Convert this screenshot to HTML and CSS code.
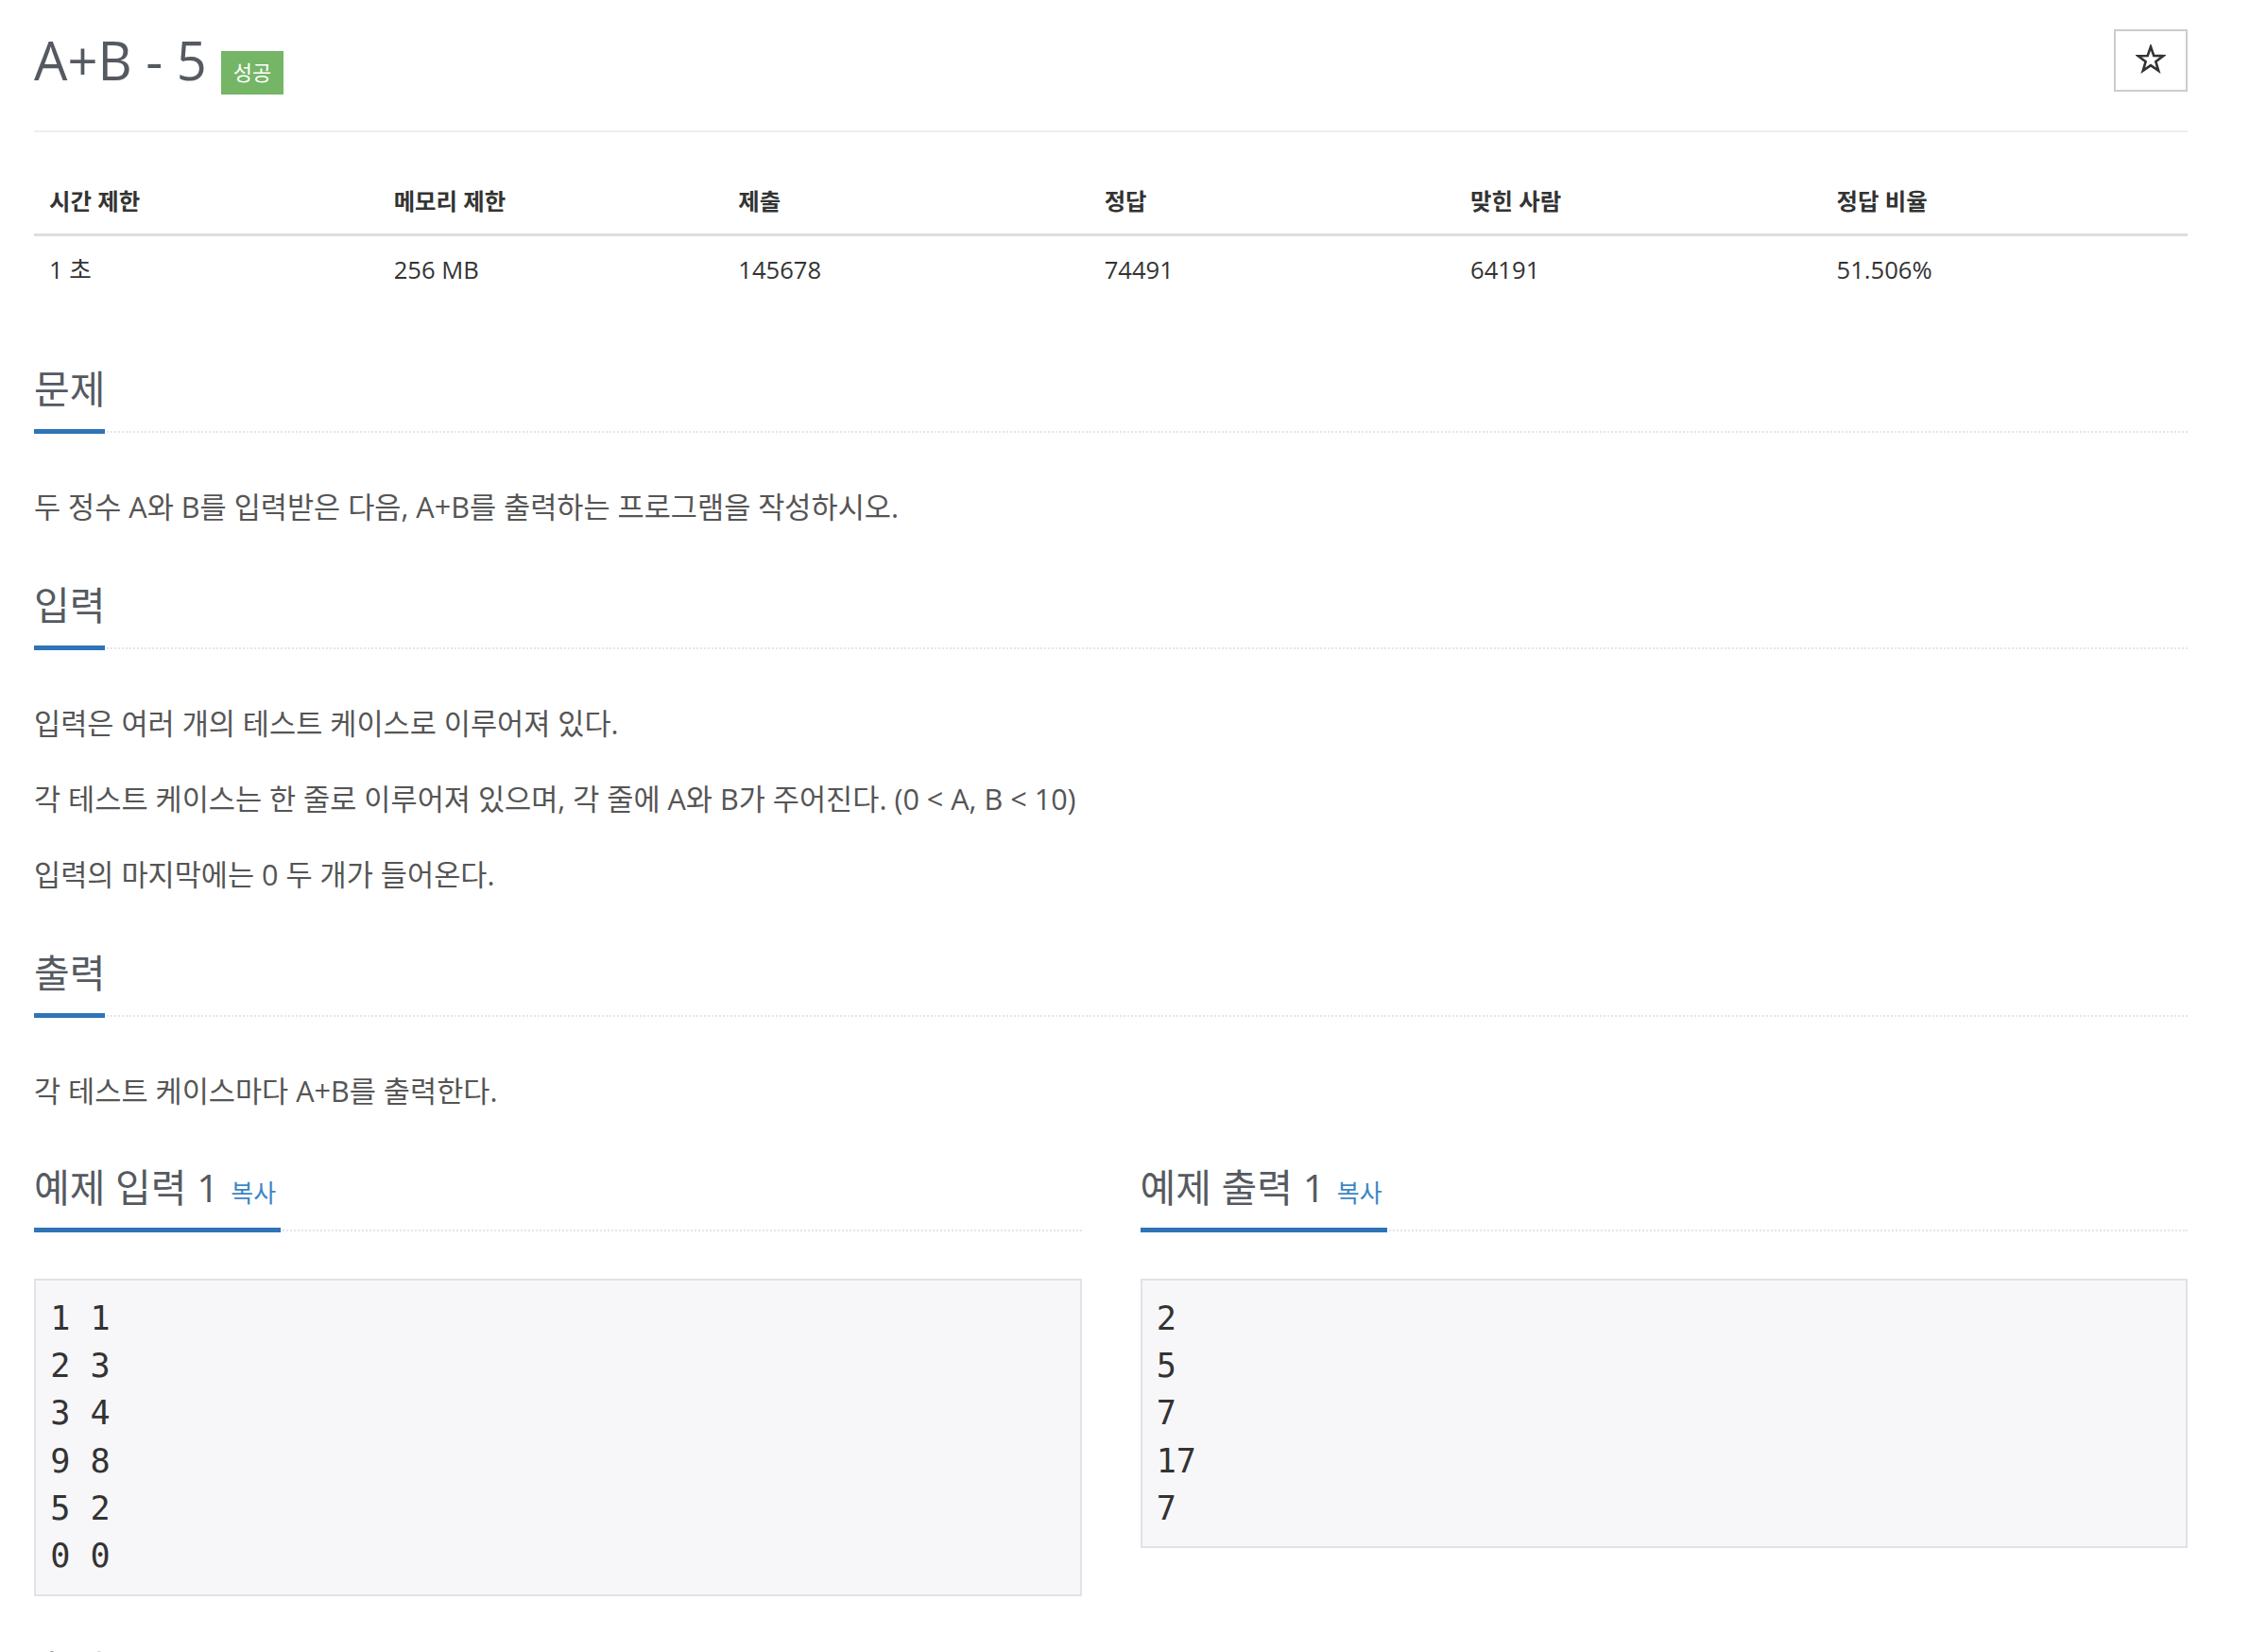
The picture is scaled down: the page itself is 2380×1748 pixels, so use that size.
FILE: index.html
```html
<!DOCTYPE html>
<html lang="ko">
<head>
<meta charset="utf-8">
<title>A+B - 5</title>
<link rel="stylesheet" href="styles.css">
</head>
<body>
<div class="page">
  <header class="page-header">
    <h1 class="title"><span class="title-text">A+B - 5</span><span class="label-success">성공</span></h1>
    <button class="star-btn" type="button" aria-label="즐겨찾기">
      <svg width="32" height="31" viewBox="-2 -2 32 31" aria-hidden="true">
        <polygon points="14,0.5 17.29,9.97 27.31,10.17 19.33,16.23 22.23,25.83 14,20.1 5.77,25.83 8.67,16.23 0.69,10.17 10.71,9.97" fill="none" stroke="#333" stroke-width="2.6" stroke-linejoin="miter"/>
      </svg>
    </button>
  </header>

  <table class="info">
    <colgroup>
      <col class="c16"><col class="c16"><col class="c17"><col class="c17"><col class="c17"><col class="c17">
    </colgroup>
    <thead>
      <tr><th>시간 제한</th><th>메모리 제한</th><th>제출</th><th>정답</th><th>맞힌 사람</th><th>정답 비율</th></tr>
    </thead>
    <tbody>
      <tr><td>1 초</td><td>256 MB</td><td>145678</td><td>74491</td><td>64191</td><td>51.506%</td></tr>
    </tbody>
  </table>

  <section class="sec first">
    <div class="headline"><h2>문제</h2></div>
    <div class="text">
      <p>두 정수 A와 B를 입력받은 다음, A+B를 출력하는 프로그램을 작성하시오.</p>
    </div>
  </section>

  <section class="sec">
    <div class="headline"><h2>입력</h2></div>
    <div class="text">
      <p>입력은 여러 개의 테스트 케이스로 이루어져 있다.</p>
      <p>각 테스트 케이스는 한 줄로 이루어져 있으며, 각 줄에 A와 B가 주어진다. (0 &lt; A, B &lt; 10)</p>
      <p>입력의 마지막에는 0 두 개가 들어온다.</p>
    </div>
  </section>

  <section class="sec">
    <div class="headline"><h2>출력</h2></div>
    <div class="text">
      <p>각 테스트 케이스마다 A+B를 출력한다.</p>
    </div>
  </section>

  <div class="samples">
    <section class="sample">
      <div class="headline"><h2>예제 입력 1 <a class="copy" href="#">복사</a></h2></div>
      <pre class="sampledata">1 1
2 3
3 4
9 8
5 2
0 0</pre>
    </section>
    <section class="sample">
      <div class="headline"><h2>예제 출력 1 <a class="copy" href="#">복사</a></h2></div>
      <pre class="sampledata">2
5
7
17
7</pre>
    </section>
  </div>

  <section class="sec after-samples">
    <div class="headline"><h2>출처</h2></div>
    <div class="text">
      <p>문제를 만든 사람: baekjoon</p>
    </div>
  </section>
</div>
</body>
</html>
```

FILE: styles.css
```css
html, body {
  margin: 0;
  padding: 0;
  background: #fff;
}

body {
  font-family: "Open Sans", "Noto Sans CJK KR", sans-serif;
  color: #555;
}

.page {
  display: flex;
  flex-direction: column;
  padding: 0 65px 0 36px;
}

/* header */
.page-header {
  display: flex;
  justify-content: space-between;
  align-items: flex-start;
  height: 107px;
  padding-top: 31px;
  border-bottom: 2px solid #eee;
}

.title {
  margin: 1px 0 0 0;
  font-size: 56px;
  line-height: 63px;
  font-weight: 400;
  color: #555a61;
  display: flex;
  align-items: baseline;
}

.label-success {
  display: inline-block;
  margin-left: 15px;
  padding: 11px 13px 13px;
  font-size: 22px;
  line-height: 1;
  font-weight: 400;
  color: #fff;
  background: #74b566;
}

.star-btn {
  width: 78px;
  height: 66px;
  padding: 0;
  margin: 0;
  border: 2px solid #ccc;
  background: #fff;
  display: flex;
  align-items: center;
  justify-content: center;
}

.star-btn svg {
  display: block;
  margin-top: -4px;
}

/* info table */
.info {
  margin-top: 44px;
  width: 100%;
  border-collapse: separate;
  border-spacing: 0;
  table-layout: fixed;
}

.c16 { width: 16%; }
.c17 { width: 17%; }

.info th {
  text-align: left;
  font-weight: 700;
  font-size: 24.4px;
  line-height: 32px;
  color: #333;
  padding: 12.8px 13px 18px 16px;
  border-bottom: 3px solid #ddd;
}

.info td {
  text-align: left;
  font-size: 25.6px;
  line-height: 32px;
  color: #333;
  padding: 20px 13px 12.8px 16px;
}

/* sections */
.sec {
  display: flex;
  flex-direction: column;
  margin-top: 59px;
}

.sec.first {
  margin-top: 75px;
}

.headline {
  display: flex;
  border-bottom: 2px dotted #e2e6ec;
}

.headline h2 {
  margin: 0 0 -3px 0;
  font-size: 41px;
  line-height: 42px;
  font-weight: 400;
  color: #555a61;
  padding-bottom: 22px;
  border-bottom: 5px solid #2f74b7;
}

.text {
  display: flex;
  flex-direction: column;
  gap: 32px;
  margin-top: 54px;
}

.text p {
  margin: 0;
  font-size: 30.6px;
  line-height: 48px;
  color: #555;
}

/* samples */
.samples {
  display: grid;
  grid-template-columns: 1fr 1fr;
  column-gap: 62px;
  align-items: start;
  margin-top: 57px;
}

.sample {
  display: flex;
  flex-direction: column;
}

.sample h2 {
  padding-right: 5px;
}

.copy {
  font-size: 26px;
  line-height: 1;
  color: #3d85c6;
  text-decoration: none;
  margin-left: 2px;
}

.sampledata {
  margin: 50px 0 0 0;
  padding: 15.2px;
  border: 2px solid #e1e1e8;
  background: #f7f7f9;
  color: #333;
  font-family: "DejaVu Sans Mono", "Liberation Mono", monospace;
  font-size: 35.2px;
  line-height: 50.3px;
  white-space: pre;
}

.after-samples {
  margin-top: 56px;
}
```
